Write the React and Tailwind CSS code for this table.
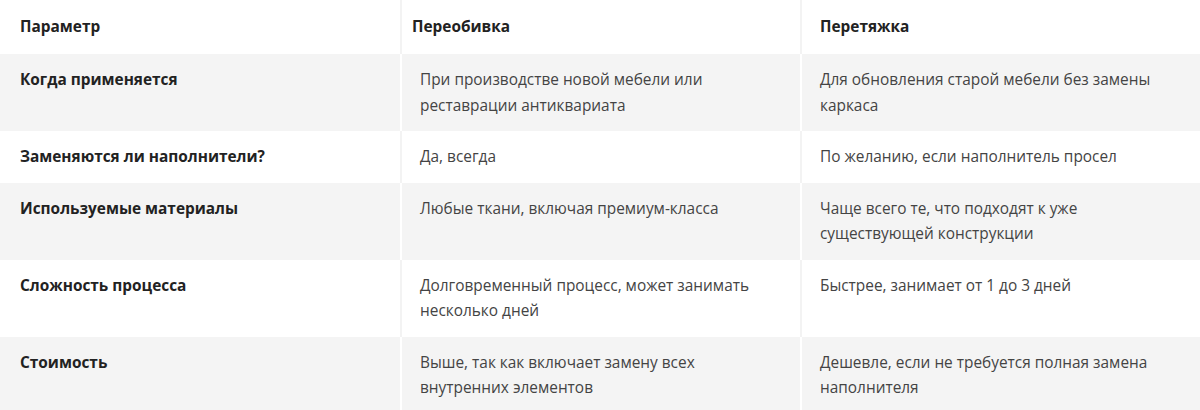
import React from "react";

const rows = [
  {
    param: "Когда применяется",
    reupholster: "При производстве новой мебели или реставрации антиквариата",
    recover: "Для обновления старой мебели без замены каркаса",
  },
  {
    param: "Заменяются ли наполнители?",
    reupholster: "Да, всегда",
    recover: "По желанию, если наполнитель просел",
  },
  {
    param: "Используемые материалы",
    reupholster: "Любые ткани, включая премиум-класса",
    recover: "Чаще всего те, что подходят к уже существующей конструкции",
  },
  {
    param: "Сложность процесса",
    reupholster: "Долговременный процесс, может занимать несколько дней",
    recover: "Быстрее, занимает от 1 до 3 дней",
  },
  {
    param: "Стоимость",
    reupholster: "Выше, так как включает замену всех внутренних элементов",
    recover: "Дешевле, если не требуется полная замена наполнителя",
  },
];

const App = () => {
  return (
    <div className="w-[1200px] bg-white font-['Open_Sans',sans-serif] text-[15.4px]">
      {/* Header */}
      <div className="grid grid-cols-[400px_400px_400px] h-[54px] items-center font-bold text-[#222]">
        <div className="pl-5">Параметр</div>
        <div className="pl-[10px] h-full flex items-center border-l-2 border-[#f3f3f3]">Переобивка</div>
        <div className="pl-[18px] h-full flex items-center border-l-2 border-[#f3f3f3]">Перетяжка</div>
      </div>

      {/* Rows */}
      {rows.map((row, i) => {
        const gray = i % 2 === 0;
        const divider = gray ? "border-white" : "border-[#f3f3f3]";
        return (
          <div
            key={row.param}
            className={`grid grid-cols-[400px_400px_400px] leading-[25.5px] ${gray ? "bg-[#f4f4f4]" : "bg-white"}`}
          >
            <div className="pl-5 pr-4 py-[13px] font-bold text-[#222]">{row.param}</div>
            <div className={`pl-[18px] pr-10 py-[13px] text-[#444] border-l-2 ${divider}`}>{row.reupholster}</div>
            <div className={`pl-[18px] pr-10 py-[13px] text-[#444] border-l-2 ${divider}`}>{row.recover}</div>
          </div>
        );
      })}
    </div>
  );
};

export default App;
